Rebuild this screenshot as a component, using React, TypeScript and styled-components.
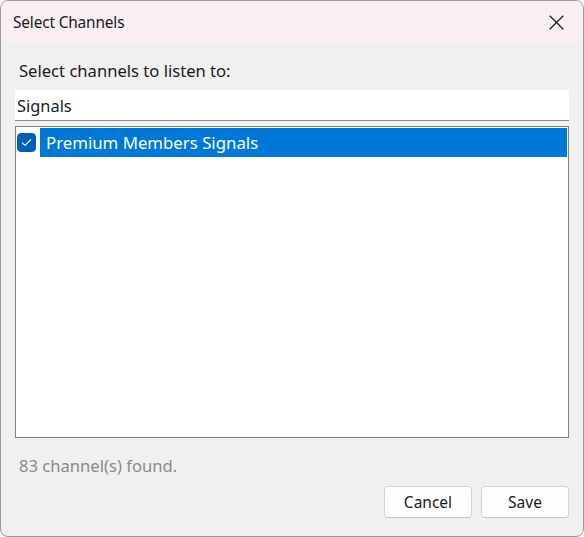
import React from "react";
import styled, { createGlobalStyle } from "styled-components";

const Global = createGlobalStyle`
  html, body { margin: 0; padding: 0; background: #ffffff; }
  body { font-family: "Noto Sans", "Open Sans", sans-serif; }
  * { box-sizing: border-box; }
`;

const Window = styled.div`
  width: 584px;
  height: 537px;
  border: 1px solid #9a9a9a;
  border-radius: 8px;
  overflow: hidden;
  background: #f0f0f0;
  display: flex;
  flex-direction: column;
`;

const TitleBar = styled.div`
  height: 43px;
  background: #f9eef3;
  display: flex;
  align-items: center;
  justify-content: space-between;
  padding: 0 0 0 12px;
  flex-shrink: 0;
`;

const Title = styled.span`
  font-size: 15.4px;
  color: #1a1a1a;
  letter-spacing: -0.15px;
`;

const CloseButton = styled.div`
  width: 46px;
  height: 43px;
  display: flex;
  align-items: center;
  justify-content: center;
  margin-right: 4px;
`;

const Body = styled.div`
  flex: 1;
  display: flex;
  flex-direction: column;
  padding: 16px 14px 18px 14px;
`;

const Label = styled.div`
  font-size: 16.6px;
  color: #1a1a1a;
  padding-left: 4px;
  line-height: 22px;
`;

const SearchInput = styled.div`
  margin-top: 8px;
  height: 31px;
  background: #ffffff;
  border-bottom: 1px solid #8a8a8a;
  display: flex;
  align-items: center;
  padding-left: 2px;
  font-size: 16.4px;
  color: #1a1a1a;
`;

const List = styled.div`
  margin-top: 5px;
  height: 312px;
  background: #ffffff;
  border: 1px solid #828282;
  padding: 1px;
  display: flex;
  flex-direction: column;
`;

const Row = styled.div`
  height: 29px;
  display: flex;
  align-items: center;
`;

const Check = styled.div<{ $checked: boolean }>`
  width: 19px;
  height: 19px;
  margin: 0 4px 0 0;
  border-radius: 4px;
  background: ${(p) => (p.$checked ? "#005fb8" : "#ffffff")};
  border: 1px solid ${(p) => (p.$checked ? "#005fb8" : "#888")};
  display: flex;
  align-items: center;
  justify-content: center;
`;

const RowLabel = styled.div<{ $selected: boolean }>`
  flex: 1;
  height: 100%;
  display: flex;
  align-items: center;
  padding-left: 6px;
  font-size: 16.8px;
  background: ${(p) => (p.$selected ? "#0078d7" : "transparent")};
  color: ${(p) => (p.$selected ? "#ffffff" : "#1a1a1a")};
`;

const Status = styled.div`
  margin-top: 16px;
  padding-left: 4px;
  font-size: 16.6px;
  color: #8a8a8a;
`;

const Footer = styled.div`
  margin-top: auto;
  display: flex;
  justify-content: flex-end;
  gap: 9px;
`;

const Button = styled.button`
  width: 88px;
  height: 32px;
  background: #fdfdfd;
  border: 1px solid #d4d4d4;
  border-bottom-color: #c4c4c4;
  border-radius: 4px;
  font-family: "Noto Sans", "Open Sans", sans-serif;
  font-size: 15.5px;
  color: #1a1a1a;
  padding: 0;
`;

export default function App() {
  return (
    <>
      <Global />
      <Window>
        <TitleBar>
          <Title>Select Channels</Title>
          <CloseButton>
            <svg width="15" height="15" viewBox="0 0 15 15">
              <path d="M0.7 0.7 L14.3 14.3 M14.3 0.7 L0.7 14.3" stroke="#1a1a1a" strokeWidth="1.25" fill="none" />
            </svg>
          </CloseButton>
        </TitleBar>
        <Body>
          <Label>Select channels to listen to:</Label>
          <SearchInput>Signals</SearchInput>
          <List>
            <Row>
              <Check $checked>
                <svg width="11" height="9" viewBox="0 0 11 9">
                  <path d="M1 4.6 L4 7.5 L10 1.3" stroke="#ffffff" strokeWidth="1.1" fill="none" />
                </svg>
              </Check>
              <RowLabel $selected>Premium Members Signals</RowLabel>
            </Row>
          </List>
          <Status>83 channel(s) found.</Status>
          <Footer>
            <Button>Cancel</Button>
            <Button>Save</Button>
          </Footer>
        </Body>
      </Window>
    </>
  );
}
